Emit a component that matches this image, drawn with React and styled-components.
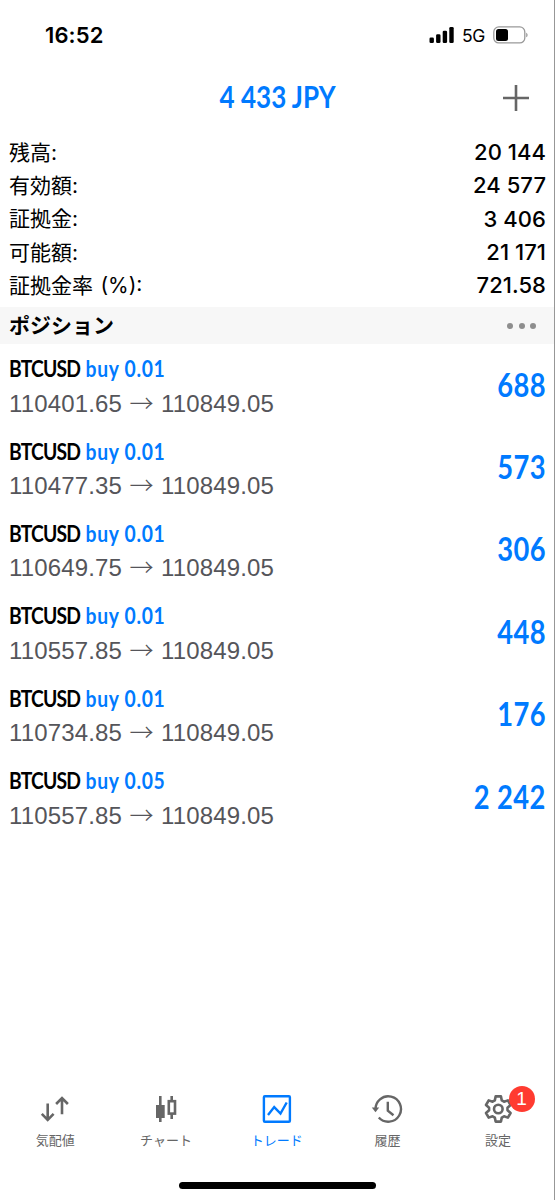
import styled, {createGlobalStyle} from "styled-components";

const GlobalStyle = createGlobalStyle`
    * {
        box-sizing: border-box;
    }

    body {
        margin: 0;
        background: #fff;
        font-family: "Inter", "Noto Sans CJK JP", sans-serif;
        color: #000;
    }
`

const Screen = styled.div`
    width: 555px;
    height: 1200px;
    display: flex;
    flex-direction: column;
    overflow: hidden;
    border-right: 1px solid #979797;
`

const StatusBar = styled.div`
    height: 72px;
    display: flex;
    justify-content: space-between;
    align-items: center;
    padding: 0 25px 2px 45px;
`

const Clock = styled.div`
    font-size: 22px;
    font-weight: 600;
    letter-spacing: 0.1px;
`

const StatusIcons = styled.div`
    display: flex;
    align-items: center;
    gap: 8px;
`

const Network = styled.span`
    font-size: 17.5px;
    letter-spacing: -0.4px;
`

const Header = styled.header`
    height: 64px;
    display: grid;
    grid-template-columns: 60px 1fr 60px;
    align-items: center;
    padding-bottom: 12px;
    padding-right: 8px;
`

const Condensed = styled.div`
    font-family: "Lato", sans-serif;
    font-weight: 700;
    white-space: pre;
    transform: scaleX(${({$scale}) => $scale || 0.84});
    transform-origin: ${({$origin}) => $origin || 'left'} center;
`

const Title = styled(Condensed)`
    grid-column: 2;
    text-align: center;
    font-size: 31px;
    line-height: 48px;
    margin: -4px 0 0 9px;
    color: #007aff;
`

const AddButton = styled.div`
    display: flex;
    justify-content: center;
`

const Summary = styled.div`
    height: 171px;
    padding: 0 8px 0 9px;
`

const SummaryRow = styled.div`
    height: 33.3px;
    display: flex;
    justify-content: space-between;
    align-items: center;
`

const SummaryLabel = styled.span`
    font-size: 21px;
    line-height: 33px;
    margin-top: -1px;
    word-spacing: 1.5px;
`

const SummaryValue = styled.span`
    font-size: 22px;
    line-height: 33px;
    font-weight: 500;
    letter-spacing: 0.05px;
`

const SectionBar = styled.div`
    height: 37px;
    display: flex;
    justify-content: space-between;
    align-items: center;
    padding: 0 18px 0 9px;
    background: #f7f7f7;
    font-family: "Noto Sans CJK JP", sans-serif;
    font-size: 21px;
    font-weight: 700;
`

const SectionTitle = styled.span`
    line-height: 35px;
    margin-top: -2px;
`

const Dots = styled.div`
    display: flex;
    gap: 5.5px;

    i {
        width: 6px;
        height: 6px;
        border-radius: 50%;
        background: #8e8e8e;
    }
`

const PositionList = styled.div`
    flex: 1;
`

const PositionRow = styled.div`
    height: 82.4px;
    display: flex;
    justify-content: space-between;
    align-items: center;
    padding: 0 8px 0 9px;
`

const PositionSymbol = styled(Condensed)`
    font-size: 23px;
    line-height: 34px;
    letter-spacing: -1px;

    span {
        color: #007aff;
        letter-spacing: 0.8px;
        margin-left: 2px;
    }
`

const Prices = styled.div`
    display: flex;
    align-items: center;
    height: 34px;
    padding-top: 3px;
    font-family: "Liberation Sans", sans-serif;
    font-size: 24px;
    letter-spacing: 0.15px;
    color: #55555a;
`

const Arrow = styled.span`
    width: 39px;
    text-align: center;
    font-family: "Noto Sans CJK JP", sans-serif;
    font-weight: 300;
    font-size: 24px;
    line-height: 34px;
    margin-top: -4px;
`

const Profit = styled(Condensed)`
    font-size: 32.5px;
    line-height: 40px;
    letter-spacing: 0.5px;
    margin-top: -1px;
    color: #007aff;
`

const TabBar = styled.nav`
    height: 89px;
    display: flex;
`

const Tab = styled.div`
    width: 110.7px;
    display: flex;
    flex-direction: column;
    align-items: center;
    color: ${({$active}) => $active ? '#007aff' : '#666'};
`

const TabIcon = styled.div`
    position: relative;
    height: 32px;
    margin-bottom: 5px;
`

const TabLabel = styled.span`
    font-family: "Noto Sans CJK JP", sans-serif;
    font-size: 13px;
    line-height: 20px;
`

const Badge = styled.span`
    position: absolute;
    left: 26.5px;
    top: -7px;
    width: 26px;
    height: 26px;
    border-radius: 50%;
    background: #ff3b30;
    color: #fff;
    font-family: "Liberation Sans", sans-serif;
    font-size: 19px;
    line-height: 25px;
    text-align: center;
`

const HomeIndicator = styled.div`
    width: 197px;
    height: 7px;
    margin: 0 178px 11.5px 179px;
    border-radius: 4px;
    background: #000;
`

const summary = [
    {label: '残高:', value: '20 144'},
    {label: '有効額:', value: '24 577'},
    {label: '証拠金:', value: '3 406'},
    {label: '可能額:', value: '21 171'},
    {label: '証拠金率 (%):', value: '721.58'},
]

const positions = [
    {volume: '0.01', open: '110401.65', profit: '688'},
    {volume: '0.01', open: '110477.35', profit: '573'},
    {volume: '0.01', open: '110649.75', profit: '306'},
    {volume: '0.01', open: '110557.85', profit: '448'},
    {volume: '0.01', open: '110734.85', profit: '176'},
    {volume: '0.05', open: '110557.85', profit: '2 242'},
]

const Signal = () => (
    <svg width="25" height="18" viewBox="0 0 25 18">
        <rect x="0.5" y="11.5" width="4.4" height="5.5" rx="1.3"/>
        <rect x="7.1" y="8.3" width="4.4" height="8.7" rx="1.3"/>
        <rect x="13.7" y="4.8" width="4.4" height="12.2" rx="1.3"/>
        <rect x="20.3" y="1" width="4.4" height="16" rx="1.3"/>
    </svg>
)

const Battery = () => (
    <svg width="36" height="18" viewBox="0 0 36 18">
        <rect x="0.8" y="0.9" width="31" height="16" rx="5" fill="none" stroke="#999" strokeWidth="1.3"/>
        <rect x="3" y="3" width="12" height="12" rx="2.5"/>
        <path d="M33.3 6.7c1.6.6 1.6 4 0 4.6z" fill="#888"/>
    </svg>
)

const svgProps = {width: 32, height: 32, viewBox: '0 0 32 32', fill: 'none', stroke: 'currentColor'}

const QuotesIcon = () => (
    <svg {...svgProps} strokeWidth="2.6">
        <path d="M8.7 10.5V27M2.8 20.8l5.9 6 5.9-6M23 21.3V5M17.1 11l5.9-6 5.9 6"/>
    </svg>
)

const ChartIcon = () => (
    <svg {...svgProps} strokeWidth="2.6">
        <path d="M10.3 3v26M21.7 3v4M21.7 21v5"/>
        <rect x="6" y="12" width="8.7" height="13" fill="currentColor" stroke="none"/>
        <rect x="18.8" y="8.2" width="6.2" height="12.4"/>
    </svg>
)

const TradeIcon = () => (
    <svg {...svgProps} strokeWidth="2.4">
        <rect x="2.9" y="3.2" width="26" height="25.6" rx="1"/>
        <path d="M7 22l6.2-7.9 6.3 6.5L25.7 9.5"/>
    </svg>
)

const HistoryIcon = () => (
    <svg {...svgProps} strokeWidth="2.4">
        <path d="M4.6 17A12.7 12.7 0 1 1 7.8 24.5"/>
        <path d="M.8 14.6h7.4l-3.7 4.6z" fill="currentColor" stroke="none"/>
        <path d="M16.8 8.7v9l5.7 4.6"/>
    </svg>
)

const polar = (r, deg) => {
    const a = deg * Math.PI / 180
    return `${(16.3 + r * Math.sin(a)).toFixed(2)} ${(16 - r * Math.cos(a)).toFixed(2)}`
}

const gearPath = 'M' + [0, 60, 120, 180, 240, 300].map((a) =>
    [polar(9.3, a - 22), polar(12.9, a - 12), polar(12.9, a + 12), polar(9.3, a + 22)].join('L')
).join('L') + 'Z'

const SettingsIcon = () => (
    <svg {...svgProps} strokeWidth="2.6" strokeLinejoin="round">
        <path d={gearPath}/>
        <circle cx="16.3" cy="16" r="4.3"/>
    </svg>
)

const tabs = [
    {label: '気配値', icon: QuotesIcon},
    {label: 'チャート', icon: ChartIcon},
    {label: 'トレード', icon: TradeIcon, active: true},
    {label: '履歴', icon: HistoryIcon},
    {label: '設定', icon: SettingsIcon, badge: 1},
]

const Position = ({volume, open, profit}) => (
    <PositionRow>
        <div>
            <PositionSymbol>BTCUSD <span>buy {volume}</span></PositionSymbol>
            <Prices>{open}<Arrow>→</Arrow>110849.05</Prices>
        </div>
        <Profit $origin="right">{profit}</Profit>
    </PositionRow>
)

const App = () => {
    return (
        <>
            <GlobalStyle/>
            <Screen>
                <StatusBar>
                    <Clock>16:52</Clock>
                    <StatusIcons>
                        <Signal/>
                        <Network>5G</Network>
                        <Battery/>
                    </StatusIcons>
                </StatusBar>
                <Header>
                    <Title $origin="center">4 433 JPY</Title>
                    <AddButton>
                        <svg width="26" height="26" viewBox="0 0 26 26" stroke="#666" strokeWidth="2.6">
                            <path d="M13 0v26M0 13h26"/>
                        </svg>
                    </AddButton>
                </Header>
                <Summary>
                    {summary.map(({label, value}) => (
                        <SummaryRow key={label}>
                            <SummaryLabel>{label}</SummaryLabel>
                            <SummaryValue>{value}</SummaryValue>
                        </SummaryRow>
                    ))}
                </Summary>
                <SectionBar>
                    <SectionTitle>ポジション</SectionTitle>
                    <Dots><i/><i/><i/></Dots>
                </SectionBar>
                <PositionList>
                    {positions.map((item, index) => <Position key={index} {...item}/>)}
                </PositionList>
                <TabBar>
                    {tabs.map(({label, icon: Icon, active, badge}) => (
                        <Tab key={label} $active={active}>
                            <TabIcon>
                                <Icon/>
                                {badge && <Badge>{badge}</Badge>}
                            </TabIcon>
                            <TabLabel>{label}</TabLabel>
                        </Tab>
                    ))}
                </TabBar>
                <HomeIndicator/>
            </Screen>
        </>
    )
}

export default App
